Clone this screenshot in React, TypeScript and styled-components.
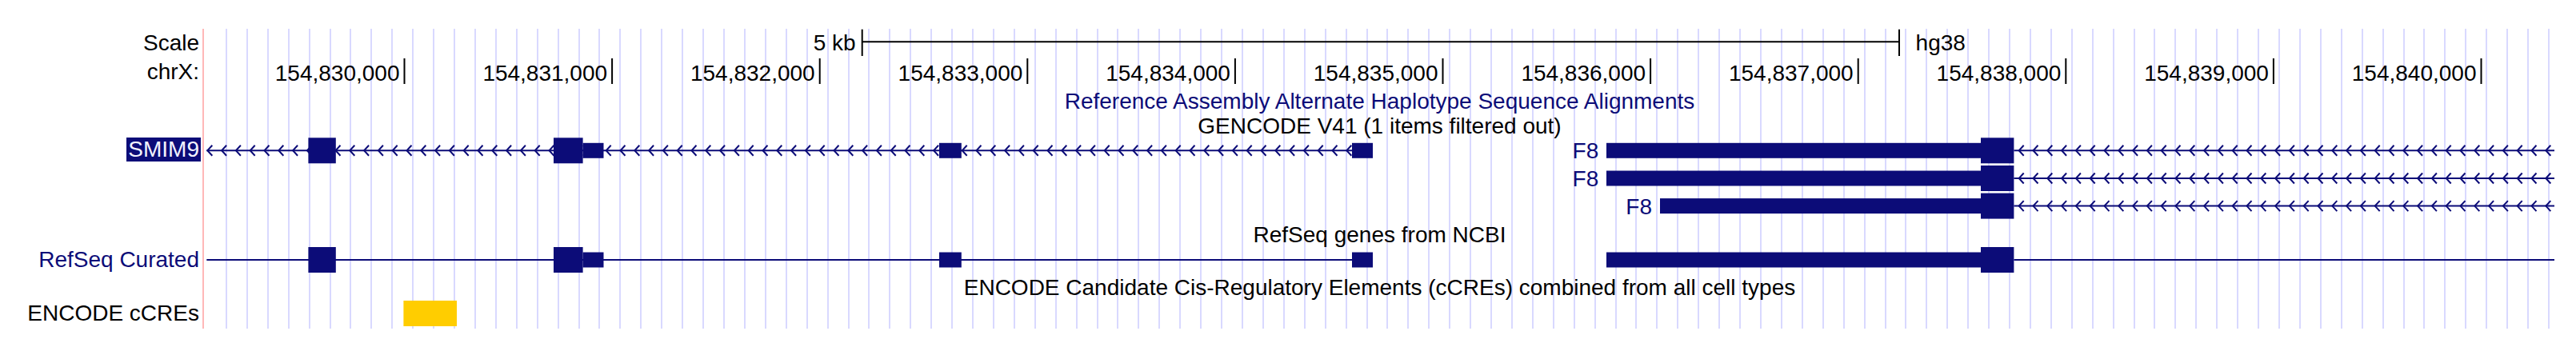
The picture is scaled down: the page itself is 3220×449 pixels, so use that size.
import React from 'react';
import styled, { createGlobalStyle } from 'styled-components';

// UCSC-style track image: left label column + data column with guide lines

const NAVY = '#0c0c78';
const GUIDE = '#d9d9ff';
const CCRE_YELLOW = '#ffcd00';
const LANE_X = 253; // page x where the data column starts
const LANE_W = 2941;
const ROWS = [35, 38, 35, 28, 105, 34, 33, 32, 32, 3];

const lx = (x: number) => x - LANE_X;
const commas = (n: number) => String(n).replace(/\B(?=(\d{3})+(?!\d))/g, ',');

const GlobalStyle = createGlobalStyle`
  html, body {
    margin: 0;
    padding: 0;
    background: #fff;
  }
  body {
    font-family: "Liberation Sans", Arial, Helvetica, sans-serif;
    width: 3220px;
    height: 449px;
    overflow: hidden;
  }
`;

/*** LAYOUT ***/
const Browser = styled.div`
  display: grid;
  grid-template-columns: ${LANE_X}px ${LANE_W}px;
  grid-template-rows: ${ROWS.map((h) => `${h}px`).join(' ')};
  padding-top: 36px;
  font-size: 28px;
  color: #000;
`;

const Guides = styled.div`
  grid-column: 2;
  grid-row: 1 / -1;
  border-left: 2px solid #ffb8b8;
  background-image:
    linear-gradient(to right, #fff 0 20px, transparent 20px),
    repeating-linear-gradient(
      to right,
      transparent 0 0.98px,
      ${GUIDE} 0.98px 2.98px,
      transparent 2.98px 25.92px
    );
`;

const Label = styled.div<{ $row: number; $color?: string; $top?: boolean; $lh?: number }>`
  grid-column: 1;
  grid-row: ${(p) => p.$row};
  display: flex;
  justify-content: flex-end;
  align-items: ${(p) => (p.$top ? 'flex-start' : 'center')};
  padding-right: 4px;
  color: ${(p) => p.$color ?? '#000'};
  line-height: ${(p) => (p.$lh ? `${p.$lh}px` : 'normal')};
  white-space: nowrap;
`;

const ItemName = styled.span`
  background: ${NAVY};
  color: #f2f2ff;
  line-height: 30px;
  padding: 0 2px;
  margin-right: -2px;
`;

const CenterLabel = styled.div<{ $row: number; $color?: string }>`
  grid-column: 2;
  grid-row: ${(p) => p.$row};
  display: flex;
  align-items: center;
  justify-content: center;
  padding-left: 2px;
  color: ${(p) => p.$color ?? '#000'};
  white-space: nowrap;
`;

const Track = styled.svg<{ $row: number }>`
  grid-column: 2;
  grid-row: ${(p) => p.$row};
  display: block;
  overflow: visible;
  font-family: inherit;
  font-size: 28px;
`;

/*** GENE MODELS ***/
type Block = { start: number; end: number; coding?: boolean };

interface GeneProps {
  y: number;
  line?: [number, number];
  blocks: Block[];
  barbs?: { from: number; to: number; step: number };
  name?: string;
  nameX?: number;
}

function GeneModel({ y, line, blocks, barbs, name, nameX }: GeneProps) {
  const chevrons: number[] = [];
  if (barbs) {
    for (let x = barbs.from; x <= barbs.to - 6; x += barbs.step) chevrons.push(x);
  }
  return (
    <g>
      {line && (
        <line x1={lx(line[0])} x2={lx(line[1])} y1={y} y2={y} stroke={NAVY} strokeWidth={2} />
      )}
      {chevrons.map((x) => (
        <polyline
          key={x}
          points={`${lx(x) + 6},${y - 6.5} ${lx(x)},${y} ${lx(x) + 6},${y + 6.5}`}
          fill="none"
          stroke={NAVY}
          strokeWidth={2}
        />
      ))}
      {blocks.map((b) => {
        const h = b.coding ? 32 : 19;
        return (
          <rect key={b.start} x={lx(b.start)} y={y - h / 2} width={b.end - b.start} height={h} fill={NAVY} />
        );
      })}
      {name && nameX !== undefined && (
        <text x={lx(nameX)} y={y + 10} textAnchor="end" fill={NAVY}>
          {name}
        </text>
      )}
    </g>
  );
}

const SMIM9: Block[] = [
  { start: 385.4, end: 419.8, coding: true },
  { start: 692, end: 728.6, coding: true },
  { start: 728.6, end: 754.5 },
  { start: 1174, end: 1201.8 },
  { start: 1690, end: 1716 },
];

const f8 = (utrStart: number): Block[] => [
  { start: utrStart, end: 2476 },
  { start: 2476, end: 2517.4, coding: true },
];

const F8_INTRON: [number, number] = [2517.4, 3193];
const SMIM9_INTRON: [number, number] = [258.3, 1690];

/*** TRACKS ***/
function ScaleBar() {
  const x1 = lx(1077.7);
  const x2 = lx(2374);
  return (
    <Track $row={1} width={LANE_W} height={ROWS[0]}>
      <text x={lx(1069.6)} y={26.5} textAnchor="end">
        5 kb
      </text>
      <g stroke="#000" strokeWidth={2}>
        <line x1={x1} y1={16.3} x2={x2} y2={16.3} />
        <line x1={x1} y1={0.7} x2={x1} y2={34} />
        <line x1={x2} y1={0.7} x2={x2} y2={34} />
      </g>
      <text x={lx(2394.6)} y={26.5}>
        hg38
      </text>
    </Track>
  );
}

function Ruler() {
  const ticks = Array.from({ length: 11 }, (_, k) => ({
    x: lx(505.5 + 259.6 * k),
    pos: 154830000 + 1000 * k,
  }));
  return (
    <Track $row={2} width={LANE_W} height={ROWS[1]}>
      {ticks.map((t) => (
        <g key={t.pos}>
          <line x1={t.x} x2={t.x} y1={2} y2={34} stroke="#000" strokeWidth={2} />
          <text x={t.x - 6} y={30} textAnchor="end">
            {commas(t.pos)}
          </text>
        </g>
      ))}
    </Track>
  );
}

function GencodeTrack() {
  const rows = [16.3, 51, 85.6];
  return (
    <Track $row={5} width={LANE_W} height={ROWS[4]}>
      <GeneModel
        y={rows[0]}
        line={SMIM9_INTRON}
        barbs={{ from: 259.3, to: 1690, step: 17.8 }}
        blocks={SMIM9}
      />
      <GeneModel
        y={rows[0]}
        line={F8_INTRON}
        barbs={{ from: 2523.7, to: 3193, step: 17.8 }}
        blocks={f8(2008)}
        name="F8"
        nameX={1998.3}
      />
      <GeneModel
        y={rows[1]}
        line={F8_INTRON}
        barbs={{ from: 2523.7, to: 3193, step: 17.8 }}
        blocks={f8(2008)}
        name="F8"
        nameX={1998.3}
      />
      <GeneModel
        y={rows[2]}
        line={F8_INTRON}
        barbs={{ from: 2523.7, to: 3193, step: 17.8 }}
        blocks={f8(2075)}
        name="F8"
        nameX={2065}
      />
    </Track>
  );
}

function RefSeqTrack() {
  return (
    <Track $row={7} width={LANE_W} height={ROWS[6]}>
      <GeneModel y={14} line={SMIM9_INTRON} blocks={SMIM9} />
      <GeneModel y={14} line={F8_INTRON} blocks={f8(2008)} />
    </Track>
  );
}

function CcreTrack() {
  return (
    <Track $row={9} width={LANE_W} height={ROWS[8]}>
      <rect x={lx(504.4)} y={0} width={66.6} height={32} fill={CCRE_YELLOW} />
    </Track>
  );
}

export default function App() {
  return (
    <>
      <GlobalStyle />
      <Browser>
        <Guides />

        <Label $row={1}>Scale</Label>
        <ScaleBar />

        <Label $row={2}>chrX:</Label>
        <Ruler />

        <CenterLabel $row={3} $color={NAVY}>
          Reference Assembly Alternate Haplotype Sequence Alignments
        </CenterLabel>

        <CenterLabel $row={4}>GENCODE V41 (1 items filtered out)</CenterLabel>
        <Label $row={5} $top>
          <ItemName>SMIM9</ItemName>
        </Label>
        <GencodeTrack />

        <CenterLabel $row={6}>RefSeq genes from NCBI</CenterLabel>
        <Label $row={7} $top $lh={28} $color={NAVY}>
          RefSeq Curated
        </Label>
        <RefSeqTrack />

        <CenterLabel $row={8}>
          ENCODE Candidate Cis-Regulatory Elements (cCREs) combined from all cell types
        </CenterLabel>
        <Label $row={9}>ENCODE cCREs</Label>
        <CcreTrack />
      </Browser>
    </>
  );
}
